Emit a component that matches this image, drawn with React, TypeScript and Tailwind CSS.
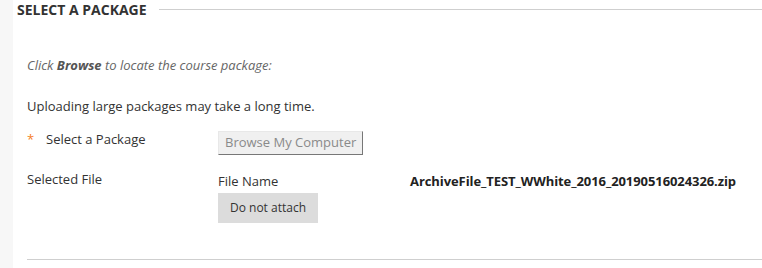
export default function App() {
  return (
    <div className="flex h-[268px] w-[762px] overflow-hidden bg-white font-['Open_Sans',sans-serif] text-[13px] text-[#333]">
      <div className="w-[13px] shrink-0 bg-[#f7f7f7]" />
      <div className="flex flex-1 flex-col">
        <div className="flex h-[19px] items-center">
          <h2 className="pl-[4px] pr-[12px] text-[14px] font-bold uppercase leading-none text-[#333]">
            Select a Package
          </h2>
          <div className="h-px flex-1 bg-[#cfcfcf]" />
        </div>
        <div className="flex flex-1 flex-col pl-[14px]">
          <p className="mt-[37px] italic text-[#666]">
            Click <b className="font-bold text-[#555]">Browse</b> to locate the course package:
          </p>
          <p className="mt-[21px]">Uploading large packages may take a long time.</p>
          <div className="mt-[13px] flex items-start">
            <div className="flex w-[191px] items-center pt-[1px]">
              <span className="w-[19px] text-[#f58025]">*</span>
              <span>Select a Package</span>
            </div>
            <button className="mt-[2px] h-[24px] border border-t-[#e8e8e8] border-l-[#e8e8e8] border-r-[#777] border-b-[#777] bg-[#f0f0f0] px-[6px] text-[13px] text-[#8a8a8a]">
              Browse My Computer
            </button>
          </div>
          <div className="mt-[15px] flex items-start">
            <span className="w-[191px]">Selected File</span>
            <div className="flex w-[192px] flex-col items-start">
              <span className="mt-[2px]">File Name</span>
              <button className="mt-[1px] h-[30px] w-[100px] bg-[#dcdcdc] text-[12px] text-[#333]">
                Do not attach
              </button>
            </div>
            <span className="mt-[2px] font-bold tracking-[-0.08px] text-[#222]">
              ArchiveFile_TEST_WWhite_2016_20190516024326.zip
            </span>
          </div>
          <div className="mt-[36px] h-px bg-[#cfcfcf]" />
        </div>
      </div>
    </div>
  );
}
